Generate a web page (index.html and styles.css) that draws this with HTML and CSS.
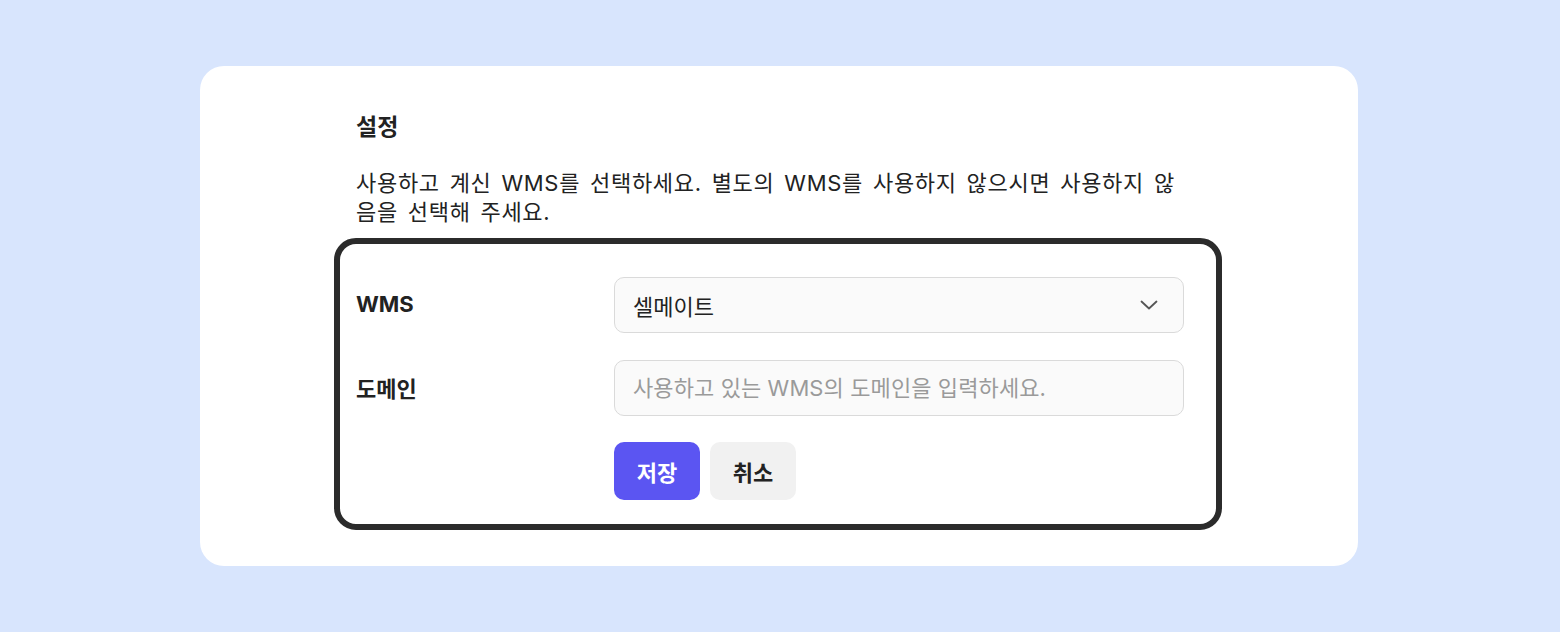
FILE: index.html
```html
<!DOCTYPE html>
<html lang="ko">
<head>
<meta charset="utf-8">
<title>설정</title>
<link rel="stylesheet" href="styles.css">
</head>
<body>
<main class="card">
  <section class="settings">
    <h2 class="title">설정</h2>
    <p class="desc">사용하고 계신 WMS를 선택하세요. 별도의 WMS를 사용하지 않으시면 사용하지 않음을 선택해 주세요.</p>
    <form class="form-box">
      <label class="label" for="wms">WMS</label>
      <div class="select" id="wms">
        <span class="select-value">셀메이트</span>
        <svg class="chevron" width="18" height="10" viewBox="0 0 18 10" fill="none"><path d="M1.5 1.5 L9 8.5 L16.5 1.5" stroke="#555" stroke-width="1.8" stroke-linecap="round" stroke-linejoin="round"/></svg>
      </div>
      <label class="label" for="domain">도메인</label>
      <input class="input" id="domain" type="text" placeholder="사용하고 있는 WMS의 도메인을 입력하세요.">
      <div class="actions">
        <button type="button" class="btn btn-primary">저장</button>
        <button type="button" class="btn btn-secondary">취소</button>
      </div>
    </form>
  </section>
</main>
</body>
</html>
```
FILE: styles.css
```css
* { box-sizing: border-box; }
html, body { margin: 0; }
body {
  background: #d8e5fd;
  font-family: Inter, "Noto Sans CJK KR", sans-serif;
  color: #222;
  padding: 66px 0 0 200px;
  min-height: 632px;
}
.card {
  width: 1158px;
  height: 500px;
  background: #fff;
  border-radius: 24px;
  padding: 46px 0 0 134px;
}
.settings { width: 888px; }
.title {
  margin: 0 0 0 22px;
  font-size: 23px;
  font-weight: 700;
  line-height: 30px;
  color: #222;
}
.desc {
  margin: 27px 0 0 22px;
  width: 830px;
  font-size: 22px;
  letter-spacing: 0.7px;
  word-spacing: 3px;
  word-break: break-all;
  line-height: 29px;
  color: #222;
}
.form-box {
  margin-top: 11px;
  border: 6px solid #2b2b2b;
  border-radius: 22px;
  height: 292px;
  padding: 33px 0 0 16px;
  display: grid;
  grid-template-columns: 258px 570px;
  align-content: start;
  row-gap: 27px;
  align-items: center;
}
.label {
  font-size: 22px;
  font-weight: 700;
  color: #222;
  margin-top: -2px;
}
.select, .input {
  height: 56px;
  border: 1.5px solid #dadada;
  border-radius: 10px;
  background: #fafafa;
  font-family: inherit;
  font-size: 22px;
  padding: 0 18px;
}
.select {
  display: flex;
  align-items: center;
  justify-content: space-between;
  color: #222;
}
.chevron { margin-right: 7px; }
.input { width: 570px; color: #222; outline: none; letter-spacing: 0.1px; }
.input::placeholder { color: #9a9a9a; }
.actions {
  grid-column: 2;
  display: flex;
  gap: 10px;
  margin-top: -1px;
}
.btn {
  width: 86px;
  height: 58px;
  border: none;
  border-radius: 10px;
  font-family: inherit;
  font-size: 22px;
  font-weight: 700;
}
.btn-primary { background: #5b55f2; color: #fff; }
.btn-secondary { background: #f1f1f1; color: #222; }
```
